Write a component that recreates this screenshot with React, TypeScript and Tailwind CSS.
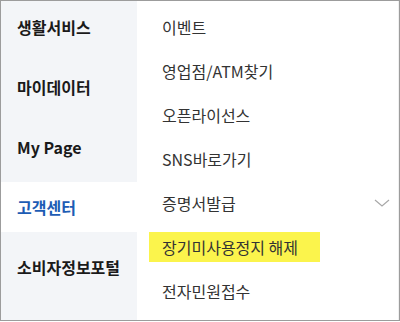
const leftMenu = ['생활서비스', '마이데이터', 'My Page', '고객센터', '소비자정보포털'];
const subMenu = ['이벤트', '영업점/ATM찾기', '오픈라이선스', 'SNS바로가기', '증명서발급', '장기미사용정지 해제', '전자민원접수'];

export default function App() {
  return (
    <div className="w-[400px] h-[322px] bg-white" style={{ fontFamily: '"Noto Sans CJK KR", "Noto Sans", sans-serif' }}>
      <div className="h-[321px] border border-[#9c9c9c] flex overflow-hidden">
        {/* left category column */}
        <div className="w-[136px] bg-[#f3f5f8] flex flex-col gap-[10px] pt-[1px]">
          {leftMenu.map((label) => {
            const active = label === '고객센터';
            return (
              <div
                key={label}
                className={
                  active
                    ? 'h-[50px] flex items-center pl-[16px] bg-white text-[16px] font-bold text-[#1d5cb4]'
                    : 'h-[50px] flex items-center pl-[16px] text-[16px] font-bold text-[#1a1a1a]'
                }
              >
                {label}
              </div>
            );
          })}
        </div>

        {/* sub menu */}
        <div className="flex-1 flex flex-col pt-[4px] pl-[12px] pr-[7px] border-r border-[#f0f0f0]">
          {subMenu.map((label) => {
            if (label === '장기미사용정지 해제') {
              return (
                <div key={label} className="h-[44px] flex items-center">
                  <div className="w-[171px] h-[30px] bg-[#fbf44c] flex items-center pl-[13px] text-[16px] text-[#333]">
                    {label}
                  </div>
                </div>
              );
            }
            return (
              <div key={label} className="h-[44px] flex items-center justify-between pl-[13px] text-[16px] text-[#333]">
                <span>{label}</span>
                {label === '증명서발급' && (
                  <svg width="16" height="8" viewBox="0 0 16 8" className="mr-[1px]">
                    <path d="M1 1 L8 7 L15 1" fill="none" stroke="#a8a8a8" strokeWidth="1.2" />
                  </svg>
                )}
              </div>
            );
          })}
        </div>
      </div>
    </div>
  );
}
